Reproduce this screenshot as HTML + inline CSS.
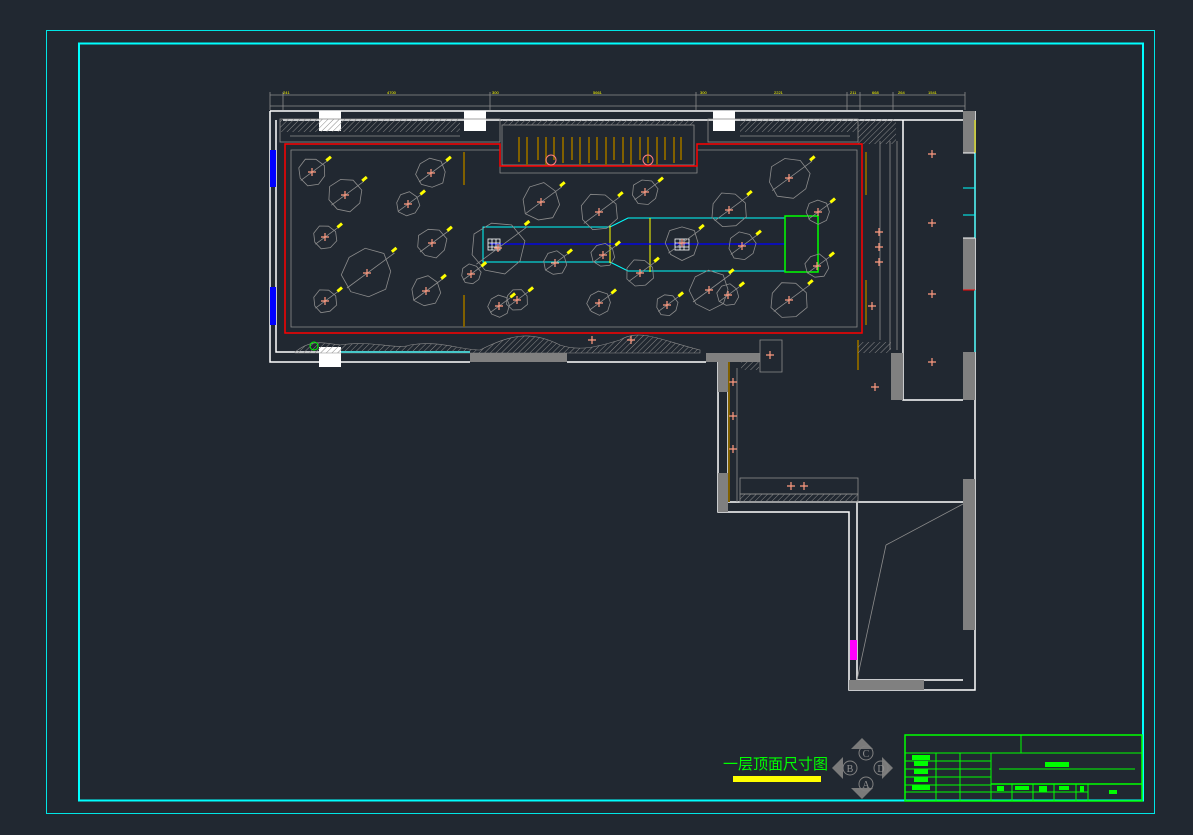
<!DOCTYPE html>
<html><head><meta charset="utf-8"><style>
html,body{margin:0;padding:0;background:#212831;width:1193px;height:835px;overflow:hidden}
svg{display:block}
</style></head><body>
<svg id="s" width="1193" height="835" viewBox="0 0 1193 835" xmlns="http://www.w3.org/2000/svg">
<defs>
<pattern id="h" width="4" height="4" patternUnits="userSpaceOnUse" patternTransform="rotate(45)"><line x1="0" y1="0" x2="0" y2="4" stroke="#8a8a8a" stroke-width="1"/></pattern>
</defs>
<rect x="0" y="0" width="1193" height="835" fill="#212831"/>
<rect x="46.5" y="30.5" width="1108" height="783" fill="none" stroke="#00e5e5" stroke-width="1"/>
<rect x="79" y="43.5" width="1064" height="757" fill="none" stroke="#00ffff" stroke-width="2"/>

<g stroke="#8c8c8c" stroke-width="0.8" fill="none">
<line x1="270" y1="95" x2="965" y2="95"/>
<line x1="270" y1="92" x2="270" y2="110"/><line x1="283" y1="92" x2="283" y2="110"/>
<line x1="490" y1="92" x2="490" y2="110"/><line x1="696" y1="92" x2="696" y2="110"/>
<line x1="847" y1="92" x2="847" y2="110"/><line x1="860" y1="92" x2="860" y2="110"/>
<line x1="893" y1="92" x2="893" y2="110"/><line x1="965" y1="92" x2="965" y2="110"/>
<line x1="270" y1="106" x2="965" y2="106"/>
</g>
<g fill="#ffff00" font-family="Liberation Sans,sans-serif" font-size="4">
<text x="283" y="94">241</text><text x="387" y="94">4700</text><text x="492" y="94">300</text><text x="593" y="94">5661</text><text x="700" y="94">300</text><text x="774" y="94">2221</text><text x="850" y="94">211</text><text x="872" y="94">668</text><text x="898" y="94">264</text><text x="928" y="94">1541</text>
</g>

<g stroke="#ffffff" stroke-width="1.5" fill="none">
<path d="M270 111 H963 M270 111 V362 H470 M567 362 H706 M276 120 V352 H470 M283 120 H963"/>
<path d="M718 362 V512 H849 V690 H975 V111"/>
<path d="M728 362 V502 H857 V680 H963"/>
<path d="M857 502 H963"/>
<path d="M903 120 V400 H963"/>
</g>
<rect x="963" y="111" width="12" height="42" fill="#808080"/>
<rect x="963" y="238" width="12" height="52" fill="#808080"/>
<rect x="963" y="352" width="12" height="48" fill="#808080"/>
<rect x="963" y="479" width="12" height="151" fill="#808080"/>
<g stroke="#00ffff" stroke-width="1"><line x1="975" y1="153" x2="975" y2="238"/><line x1="975" y1="290" x2="975" y2="352"/><line x1="963" y1="188" x2="975" y2="188"/><line x1="963" y1="215" x2="975" y2="215"/></g>
<line x1="963" y1="290" x2="975" y2="290" stroke="#ff0000" stroke-width="1"/>
<line x1="975" y1="120" x2="975" y2="153" stroke="#ffff00" stroke-width="1"/>
<g stroke="#fff" stroke-width="1"><line x1="963" y1="153" x2="975" y2="153"/><line x1="963" y1="238" x2="975" y2="238"/></g>

<g fill="#ffffff">
<rect x="319" y="111" width="22" height="20"/><rect x="464" y="111" width="22" height="20"/><rect x="713" y="111" width="22" height="20"/><rect x="319" y="347" width="22" height="20"/>
</g>
<rect x="270" y="150" width="6" height="37" fill="#0000ff"/>
<rect x="270" y="287" width="6" height="38" fill="#0000ff"/>

<rect x="280" y="119" width="180" height="13" fill="url(#h)"/>
<rect x="740" y="119" width="118" height="13" fill="url(#h)"/>
<rect x="502" y="120" width="192" height="5" fill="url(#h)"/>
<rect x="858" y="119" width="38" height="25" fill="url(#h)"/>
<g stroke="#8c8c8c" stroke-width="0.8" fill="none">
<rect x="280" y="119" width="220" height="23"/>
<rect x="708" y="119" width="150" height="23"/>
<rect x="502" y="125" width="192" height="40"/>
<path d="M290 136 H460 M740 136 H850"/>
<path d="M291 150 H500 V173 H697 V150 H857 V327 H291 Z"/>
<path d="M880 141 V340 M890 141 V350 M897 141 V350"/>
</g>
<g stroke="#806000" stroke-width="2">
<line x1="519" y1="137" x2="519" y2="162"/><line x1="527" y1="137" x2="527" y2="165"/><line x1="538" y1="137" x2="538" y2="160"/><line x1="546" y1="137" x2="546" y2="165"/><line x1="554" y1="137" x2="554" y2="160"/><line x1="563" y1="137" x2="563" y2="163"/><line x1="572" y1="137" x2="572" y2="160"/><line x1="580" y1="137" x2="580" y2="165"/><line x1="589" y1="137" x2="589" y2="163"/><line x1="597" y1="137" x2="597" y2="160"/><line x1="606" y1="137" x2="606" y2="165"/><line x1="614" y1="137" x2="614" y2="160"/><line x1="623" y1="137" x2="623" y2="163"/><line x1="631" y1="137" x2="631" y2="165"/><line x1="640" y1="137" x2="640" y2="160"/><line x1="648" y1="137" x2="648" y2="163"/><line x1="657" y1="137" x2="657" y2="165"/><line x1="665" y1="137" x2="665" y2="160"/><line x1="674" y1="137" x2="674" y2="163"/><line x1="681" y1="137" x2="681" y2="160"/>
<line x1="464" y1="152" x2="464" y2="185"/><line x1="464" y1="295" x2="464" y2="327"/>
<line x1="866" y1="152" x2="866" y2="195"/><line x1="866" y1="280" x2="866" y2="325"/>
<line x1="858" y1="340" x2="858" y2="370"/><line x1="729" y1="362" x2="729" y2="502"/>
</g>
<path d="M285 144 H500 V166 H697 V144 H862 V333 H285 Z" fill="none" stroke="#ff0000" stroke-width="1.5"/>

<path d="M295 352 C310 340 320 342 340 345 C370 340 400 350 410 345 C440 340 460 350 480 350 C510 335 530 330 560 345 C580 352 600 346 620 340 C640 328 660 340 700 350 L700 353 H295 Z" fill="url(#h)" stroke="#8c8c8c" stroke-width="0.6"/>
<rect x="470" y="353" width="97" height="9" fill="#808080"/>
<rect x="706" y="353" width="54" height="9" fill="#808080"/>
<rect x="718" y="362" width="10" height="30" fill="#808080"/>
<rect x="718" y="473" width="10" height="39" fill="#808080"/>
<rect x="849" y="680" width="75" height="10" fill="#808080"/>
<rect x="891" y="353" width="12" height="47" fill="#808080"/>
<rect x="858" y="342" width="33" height="11" fill="url(#h)"/>
<rect x="740" y="494" width="118" height="7" fill="url(#h)"/>
<rect x="741" y="362" width="18" height="8" fill="url(#h)"/>
<g stroke="#8c8c8c" stroke-width="0.8" fill="none">
<rect x="740" y="494" width="118" height="8"/>
<rect x="740" y="478" width="118" height="16"/>
<path d="M737 368 V502 M760 340 V372 H782 V340 Z"/>
<path d="M886 545 L963 504 M886 545 L857 680"/>
</g>
<polygon points="850,640 857,640 857,660 850,660" fill="#ff00ff"/>
<circle cx="314" cy="346" r="4" fill="none" stroke="#00ff00" stroke-width="1"/>

<g fill="none" stroke="#00ffff" stroke-width="1">
<path d="M483 227 H610 L628 218 H785 V271 H628 L610 262 H483 Z"/>
<line x1="341" y1="352" x2="470" y2="352"/>
</g>
<line x1="610" y1="225" x2="610" y2="263" stroke="#ffff00" stroke-width="1"/>
<line x1="650" y1="218" x2="650" y2="272" stroke="#ffff00" stroke-width="1"/>
<line x1="490" y1="244" x2="785" y2="244" stroke="#0000ff" stroke-width="1.2"/>
<rect x="785" y="216" width="33" height="56" fill="none" stroke="#00ff00" stroke-width="1.5"/>
<g stroke="#ffffff" stroke-width="0.8" fill="none">
<rect x="488" y="239" width="12" height="11"/><path d="M492 239 V250 M496 239 V250 M488 243 H500 M488 247 H500"/>
<rect x="675" y="239" width="14" height="11"/><path d="M680 239 V250 M684 239 V250 M675 243 H689 M675 247 H689"/>
</g>
<g stroke="#ff8080" fill="none" stroke-width="1"><circle cx="551" cy="160" r="5"/><circle cx="648" cy="160" r="5"/></g>

<g id="oct" fill="none" stroke="#8c8c8c" stroke-width="0.8"></g>
<g id="cr" stroke="#ff9a80" stroke-width="1.2"></g>

<text x="723" y="769" font-family="Liberation Sans,Noto Sans CJK SC,sans-serif" font-size="15" fill="#00ff00">一层顶面尺寸图</text>
<rect x="733" y="776" width="88" height="6" fill="#ffff00"/>
<g fill="#7a7a7a">
<path d="M862 738 L873 749 L851 749 Z"/><path d="M862 799 L873 788 L851 788 Z"/>
<path d="M832 768 L843 757 L843 779 Z"/><path d="M893 768 L882 757 L882 779 Z"/>
</g>
<g fill="none" stroke="#808080" stroke-width="1">
<circle cx="866" cy="753" r="7"/><circle cx="850" cy="768" r="7"/><circle cx="881" cy="768" r="7"/><circle cx="866" cy="784" r="7"/>
</g>
<g fill="#909090" font-family="Liberation Serif,serif" font-size="10" text-anchor="middle">
<text x="866" y="757">C</text><text x="850" y="772">B</text><text x="881" y="772">D</text><text x="866" y="788">A</text>
</g>
<g stroke="#00ff00" fill="none" stroke-width="1">
<rect x="905" y="735" width="237" height="66" stroke-width="1.5"/>
<line x1="905" y1="753" x2="1142" y2="753"/><line x1="1021" y1="735" x2="1021" y2="753"/>
<line x1="991" y1="753" x2="991" y2="801"/>
<line x1="991" y1="784" x2="1142" y2="784" stroke-width="1.5"/>
<line x1="936" y1="753" x2="936" y2="801"/><line x1="960" y1="753" x2="960" y2="801"/>
<line x1="905" y1="761" x2="991" y2="761"/><line x1="905" y1="769" x2="991" y2="769"/><line x1="905" y1="777" x2="991" y2="777"/><line x1="905" y1="785" x2="991" y2="785"/><line x1="905" y1="792" x2="991" y2="792"/>
<line x1="1012" y1="784" x2="1012" y2="801"/><line x1="1033" y1="784" x2="1033" y2="801"/><line x1="1054" y1="784" x2="1054" y2="801"/><line x1="1076" y1="784" x2="1076" y2="801"/><line x1="1088" y1="784" x2="1088" y2="801"/>
<line x1="991" y1="792" x2="1088" y2="792"/>
<line x1="999" y1="769" x2="1135" y2="769"/>
</g>
<g fill="#00ff00">
<rect x="912" y="755" width="18" height="5"/><rect x="914" y="761" width="14" height="5"/><rect x="914" y="769" width="14" height="5"/><rect x="914" y="777" width="14" height="5"/><rect x="912" y="785" width="18" height="5"/>
<rect x="1045" y="762" width="24" height="5"/>
<rect x="997" y="786" width="7" height="5"/><rect x="1015" y="786" width="14" height="4"/><rect x="1039" y="786" width="8" height="6"/><rect x="1059" y="786" width="10" height="4"/><rect x="1080" y="786" width="4" height="6"/><rect x="1109" y="790" width="8" height="4"/>
</g>
</svg>
<script>
var NS="http://www.w3.org/2000/svg";
var o=[[312,172,14],[345,195,17],[431,173,15],[408,204,12],[325,237,12],[432,243,15],[367,273,25],[426,291,15],[325,301,12],[498,248,27],[499,306,11],[541,202,19],[599,212,19],[645,192,13],[599,303,12],[555,263,12],[640,273,14],[667,305,11],[709,290,20],[728,295,11],[729,210,18],[789,178,21],[818,212,12],[817,266,12],[789,300,19],[742,246,14],[682,243,17],[603,255,12],[517,300,11],[471,274,10]];
var g=document.getElementById("oct"),c=document.getElementById("cr");
o.forEach(function(a,i){var p=[];for(var k=0;k<8;k++){var t=k*Math.PI/4+0.3+i*0.2;var r=a[2]*(0.95+0.08*((k*7+i)%3)/2);p.push((a[0]+r*Math.cos(t)).toFixed(1)+","+(a[1]+r*Math.sin(t)).toFixed(1));}
var e=document.createElementNS(NS,"polygon");e.setAttribute("points",p.join(" "));g.appendChild(e);
var l=document.createElementNS(NS,"line");l.setAttribute("x1",a[0]-a[2]*0.8);l.setAttribute("y1",a[1]+a[2]*0.6);l.setAttribute("x2",a[0]+a[2]*1.1);l.setAttribute("y2",a[1]-a[2]*0.8);g.appendChild(l);
var q=document.createElementNS(NS,"path");q.setAttribute("d","M"+(a[0]-4)+" "+a[1]+"h8M"+a[0]+" "+(a[1]-4)+"v8");c.appendChild(q);
var tx=document.createElementNS(NS,"rect");tx.setAttribute("x",a[0]+a[2]*0.9);tx.setAttribute("y",a[1]-a[2]*0.95);tx.setAttribute("width",6);tx.setAttribute("height",3);tx.setAttribute("fill","#ffff00");tx.setAttribute("transform","rotate(-40 "+(a[0]+a[2])+" "+(a[1]-a[2])+")");document.getElementById("s").appendChild(tx);});
[[932,154],[932,223],[932,294],[932,362],[879,232],[879,247],[879,262],[872,306],[592,340],[631,340],[791,486],[804,486],[875,387],[733,382],[733,416],[770,355],[733,449]].forEach(function(a){var q=document.createElementNS(NS,"path");q.setAttribute("d","M"+(a[0]-4)+" "+a[1]+"h8M"+a[0]+" "+(a[1]-4)+"v8");c.appendChild(q);});
</script>
</body></html>
